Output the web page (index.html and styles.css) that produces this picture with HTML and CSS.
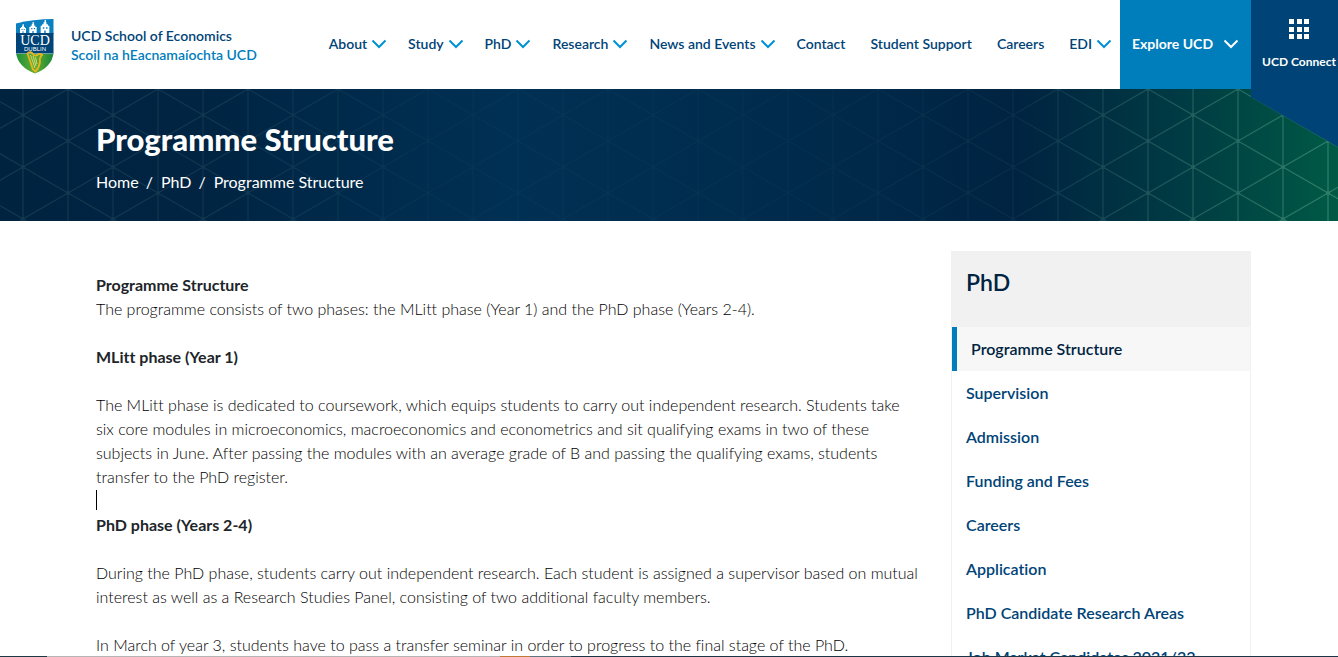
FILE: index.html
```html
<!DOCTYPE html>
<html lang="en">
  <head>
    <meta charset="utf-8">
    <meta name="viewport" content="width=device-width, initial-scale=1">
    <title>Programme Structure - UCD School of Economics</title>
    <link rel="stylesheet" href="styles.css">
  </head>

  <body>
    <svg class="sprite" aria-hidden="true">
      <symbol id="chevron" viewBox="0 0 16 10">
        <path d="M1.5 1.5 L8 8 L14.5 1.5" fill="none" stroke="currentColor" stroke-width="2"/>
      </symbol>
      <symbol id="castle" viewBox="0 0 6 9">
        <path d="M0 9V4h1V3h1V1.500h2V3h1v1h1v5z" fill="#fff"/>
        <path d="M2.700 0h1v2h-1z" fill="#fff"/>
        <path d="M2.500 9V7.300h1V9zM1.500 5h1v1h-1zM3.700 5h1v1h-1z" fill="#0a78b5"/>
      </symbol>
    </svg>

    <header class="site-header">
      <a class="brand" href="#home">
        <svg class="crest" viewBox="0 0 38 55" role="img" aria-label="UCD Dublin">
          <defs>
            <linearGradient id="crest-green">
              <stop offset="0" stop-color="#1d8f3b"/>
              <stop offset="0.5" stop-color="#62ae2e"/>
              <stop offset="1" stop-color="#16853b"/>
            </linearGradient>
            <clipPath id="shield">
              <path d="M0 4.500Q17 0 37.500 0V34Q36 48 19 54.500Q2 48 0 34z"/>
            </clipPath>
          </defs>
          <g clip-path="url(#shield)">
            <path d="M0 0h38v15H0z" fill="#0a80c0"/>
            <path d="M0 14h38v21H0z" fill="#004377"/>
            <path d="M0 34.500h38V55H0z" fill="url(#crest-green)"/>
            <path d="M0 34.500h38" stroke="#8fb6cf" stroke-width="0.700"/>
          </g>
          <use href="#castle" x="4" y="5" width="6" height="9"/>
          <use href="#castle" x="13" y="3" width="8" height="11"/>
          <use href="#castle" x="24" y="1" width="10" height="13"/>
          <text class="crest-name" x="19" y="26" text-anchor="middle">UCD</text>
          <text class="crest-city" x="19" y="32" text-anchor="middle">DUBLIN</text>
          <path d="M14.500 36L19 49M17 37L20 47M19.500 38.500L21 45" stroke="#f7e28a" stroke-width="0.800"/>
          <path d="M12 34Q15 32 17 35Q19 38 22 35.500Q24 34 26 36Q23 39 24 43Q23 49 19.500 52.500L17 50.500L11.500 34.500z" fill="none" stroke="#e9b51f" stroke-width="1.800"/>
        </svg>
        <span class="brand-text">
          <span class="brand-en">UCD School of Economics</span>
          <span class="brand-ga" lang="ga">Scoil na hEacnamaíochta UCD</span>
        </span>
      </a>

      <nav class="main-nav" aria-label="Main">
        <ul>
          <li><a href="#about">About<svg class="chevron"><use href="#chevron"/></svg></a></li>
          <li><a href="#study">Study<svg class="chevron"><use href="#chevron"/></svg></a></li>
          <li><a href="#phd">PhD<svg class="chevron"><use href="#chevron"/></svg></a></li>
          <li><a href="#research">Research<svg class="chevron"><use href="#chevron"/></svg></a></li>
          <li><a href="#news">News and Events<svg class="chevron"><use href="#chevron"/></svg></a></li>
          <li><a href="#contact">Contact</a></li>
          <li><a href="#support">Student Support</a></li>
          <li><a href="#careers">Careers</a></li>
          <li><a href="#edi">EDI<svg class="chevron"><use href="#chevron"/></svg></a></li>
        </ul>
      </nav>

      <button class="explore" type="button">Explore UCD<svg class="chevron"><use href="#chevron"/></svg></button>

      <div class="connect-slot">
        <a class="connect" href="#connect">
          <svg class="grid-icon" viewBox="0 0 20 20" aria-hidden="true">
            <path fill="currentColor" d="M0 0h5v5H0zM8 0h5v5H8zM15 0h5v5h-5zM0 8h5v5H0zM8 8h5v5H8zM15 8h5v5h-5zM0 15h5v5H0zM8 15h5v5H8zM15 15h5v5h-5z"/>
          </svg>
          <span>UCD Connect</span>
        </a>
      </div>
    </header>

    <section class="banner">
      <svg class="banner-lines" aria-hidden="true">
        <defs>
          <pattern id="triangles" x="23" y="0" width="90" height="52" patternUnits="userSpaceOnUse">
            <g fill="none" stroke="#9fdcc0" stroke-width="1.200">
              <path d="M0 26L45 0L90 26L45 52z"/>
              <path d="M0 0V52M90 0V52M45 0V52" stroke-width="2" opacity="0.600"/>
            </g>
            <g fill="#9fdcc0">
              <circle cx="0" cy="26" r="2"/>
              <circle cx="90" cy="26" r="2"/>
              <circle cx="45" cy="0" r="2"/>
              <circle cx="45" cy="52" r="2"/>
            </g>
          </pattern>
          <linearGradient id="fade">
            <stop offset="0" stop-color="#fff" stop-opacity="0.120"/>
            <stop offset="0.180" stop-color="#fff" stop-opacity="0.100"/>
            <stop offset="0.330" stop-color="#fff" stop-opacity="0.030"/>
            <stop offset="0.600" stop-color="#fff" stop-opacity="0.030"/>
            <stop offset="0.760" stop-color="#fff" stop-opacity="0.060"/>
            <stop offset="0.850" stop-color="#fff" stop-opacity="0.180"/>
            <stop offset="1" stop-color="#fff" stop-opacity="0.300"/>
          </linearGradient>
          <mask id="line-fade">
            <rect width="100%" height="100%" fill="url(#fade)"/>
          </mask>
        </defs>
        <rect width="100%" height="100%" fill="url(#triangles)" mask="url(#line-fade)"/>
      </svg>
      <div class="banner-text">
        <h1>Programme Structure</h1>
        <ol class="breadcrumb">
          <li><a href="#home">Home</a></li>
          <li><a href="#phd">PhD</a></li>
          <li>Programme Structure</li>
        </ol>
      </div>
    </section>

    <div class="page">
      <main class="content">
        <p><strong>Programme Structure</strong><br>
        The programme consists of two phases: the MLitt phase (Year 1) and the PhD phase (Years 2-4).</p>
        <p><strong>MLitt phase (Year 1)</strong></p>
        <p class="before-caret">The MLitt phase is dedicated to coursework, which equips students to carry out independent research. Students take six core modules in microeconomics, macroeconomics and econometrics and sit qualifying exams in two of these subjects in June. After passing the modules with an average grade of B and passing the qualifying exams, students transfer to the PhD register.</p>
        <div class="caret-line"><span class="caret"></span></div>
        <p><strong>PhD phase (Years 2-4)</strong></p>
        <p>During the PhD phase, students carry out independent research. Each student is assigned a supervisor based on mutual interest as well as a Research Studies Panel, consisting of two additional faculty members.</p>
        <p>In March of year 3, students have to pass a transfer seminar in order to progress to the final stage of the PhD.</p>
      </main>

      <aside class="side-menu">
        <h2>PhD</h2>
        <ul>
          <li><a class="current" href="#structure">Programme Structure</a></li>
          <li><a href="#supervision">Supervision</a></li>
          <li><a href="#admission">Admission</a></li>
          <li><a href="#funding">Funding and Fees</a></li>
          <li><a href="#phd-careers">Careers</a></li>
          <li><a href="#application">Application</a></li>
          <li><a href="#areas">PhD Candidate Research Areas</a></li>
          <li><a href="#job-market">Job Market Candidates 2021/22</a></li>
        </ul>
      </aside>
    </div>

    <div class="bottom-strip"></div>
  </body>
</html>
```
FILE: styles.css
```css
* {
  box-sizing: border-box;
}

html,
body {
  height: 100%;
}

body {
  margin: 0;
  overflow: hidden;
  background: #fff;
  color: #212529;
  font: 16px/24px Lato, "Open Sans", sans-serif;
  font-variant-ligatures: none;
}

a {
  color: inherit;
  text-decoration: none;
}

ul,
ol {
  list-style: none;
  margin: 0;
  padding: 0;
}

.sprite {
  display: none;
}

/* header */

.site-header {
  display: flex;
  align-items: stretch;
  height: 89px;
  color: #004377;
  font-size: 14px;
  font-weight: 600;
}

.brand {
  display: flex;
  align-items: center;
  gap: 17px;
  padding: 3px 0 0 16px;
}

.crest {
  width: 38px;
  height: 55px;
}

.crest-name {
  font: 400 14px "Liberation Serif", serif;
  fill: #fff;
}

.crest-city {
  font: 400 6px "Liberation Sans", sans-serif;
  fill: #fff;
}

.brand-text {
  display: flex;
  flex-direction: column;
  padding-bottom: 2px;
  line-height: 19px;
  white-space: nowrap;
}

.brand-ga {
  color: #007dbb;
}

.main-nav {
  margin-left: auto;
}

.main-nav ul {
  display: flex;
  gap: 1px;
  height: 100%;
}

.main-nav a {
  display: flex;
  align-items: center;
  height: 100%;
  padding: 0 12px 2px;
  white-space: nowrap;
}

.chevron {
  width: 16px;
  height: 10px;
}

.main-nav .chevron {
  margin: 0 -4px 0 4px;
  color: #0091d5;
}

.explore {
  display: flex;
  align-items: center;
  justify-content: space-between;
  width: 131px;
  padding: 0 12px 2px;
  border: 0;
  background: #007dbb;
  color: #fff;
  font: inherit;
  font-weight: 700;
}

.connect-slot {
  position: relative;
  width: 87px;
}

/* panel hangs over the banner below */
.connect {
  position: absolute;
  z-index: 2;
  top: 0;
  left: 0;
  width: 100%;
  height: 147px;
  display: flex;
  flex-direction: column;
  align-items: center;
  gap: 13px;
  padding: 19px 0 0 9px;
  background: #004377;
  clip-path: polygon(0 0, 100% 0, 100% 100%, 0 97px);
  color: #fff;
  font-size: 12px;
  font-weight: 700;
  line-height: 20px;
  white-space: nowrap;
}

.grid-icon {
  width: 20px;
  height: 20px;
}

/* banner */

.banner {
  position: relative;
  padding: 31px 96px 27px;
  background: linear-gradient(90deg, #002340 0%, #002442 15%, #003054 38%, #002d4f 52%, #002747 68%, #002341 76%, #003a43 88%, #005a45 100%);
  color: #fff;
}

.banner-lines {
  position: absolute;
  top: 0;
  left: 0;
  width: 100%;
  height: 100%;
}

.banner-text {
  position: relative;
}

.banner h1 {
  margin: 0 0 12px;
  font-size: 31px;
  font-weight: 900;
  line-height: 38px;
}

.breadcrumb {
  display: flex;
}

.breadcrumb li + li::before {
  content: "/";
  padding: 0 8px 0 7px;
}

/* page */

.page {
  display: flex;
  gap: 30px;
  padding: 30px 87px 0 96px;
}

.content {
  flex: 1;
  padding-top: 22px;
  color: #000;
  font-weight: 300;
}

.content p {
  margin: 0 0 24px;
}

.content strong {
  color: #212529;
  font-weight: 700;
}

.content .before-caret {
  margin: 0;
}

.caret-line {
  height: 24px;
  padding-top: 1px;
}

.caret {
  display: block;
  width: 1px;
  height: 20px;
  background: #000;
}

.side-menu {
  flex: 0 0 300px;
}

.side-menu h2 {
  margin: 0;
  padding: 15px 15px 29px;
  background: #f1f1f1;
  color: #002341;
  font-size: 23px;
  font-weight: 600;
  line-height: 32px;
}

.side-menu ul {
  border: 1px solid #f1f1f1;
  border-top: 0;
}

.side-menu a {
  display: block;
  padding: 10px 14px;
  color: #004377;
  font-weight: 600;
}

.side-menu .current {
  border-left: 5px solid #007dbb;
  background: #f7f7f7;
  color: #002341;
}

.bottom-strip {
  position: fixed;
  right: 0;
  bottom: 0;
  left: 0;
  height: 1px;
  background: linear-gradient(90deg, #1d3a44 0 47px, #b5b5b5 47px 500px, #c07a35 500px 530px, #5d7680 530px 571px, #1b3547 571px);
}
```
